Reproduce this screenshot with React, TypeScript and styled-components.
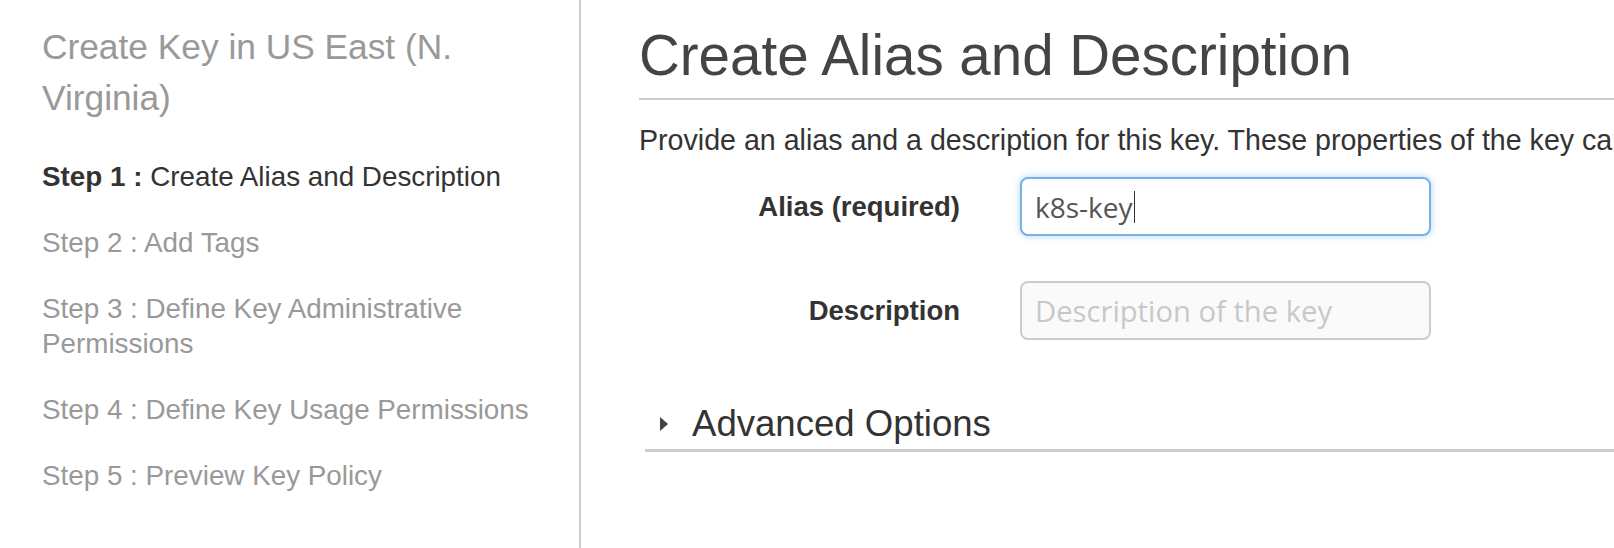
import { FC } from 'react'
import styled, { createGlobalStyle } from 'styled-components'

const GlobalStyle = createGlobalStyle`
    html, body {
        margin: 0;
        padding: 0;
        background: #fff;
    }
    body {
        font-family: 'Liberation Sans', Arial, Helvetica, sans-serif;
        color: #333;
        overflow: hidden;
    }
`

const Page = styled.div`
    display: flex;
    width: 1614px;
    height: 548px;
    overflow: hidden;
`

const Sidebar = styled.aside`
    flex: 0 0 581px;
    box-sizing: border-box;
    padding: 22px 0 0 42px;
    border-right: 2px solid #cccccc;
`

const SidebarTitle = styled.h2`
    margin: 0 0 36px;
    font-size: 35.3px;
    line-height: 50.5px;
    font-weight: 400;
    color: #999999;
    padding-right: 60px;
`

const StepList = styled.ol`
    list-style: none;
    margin: 0;
    padding: 0 40px 0 0;
    display: flex;
    flex-direction: column;
    gap: 31px;
`

type TStep = {
    active?: boolean
}

const Step = styled.li<TStep>`
    font-size: 27.8px;
    line-height: 35px;
    color: ${({ active }) => (active ? '#333333' : '#999999')};
    b {
        font-weight: 700;
    }
`

const Main = styled.main`
    flex: 1;
    min-width: 0;
    padding: 25px 0 0 58px;
`

const Title = styled.h1`
    margin: 0;
    padding-bottom: 11px;
    font-size: 56.5px;
    line-height: 62px;
    font-weight: 400;
    color: #444444;
    border-bottom: 2px solid #cccccc;
    white-space: nowrap;
`

const Intro = styled.p`
    margin: 20px 0 0;
    font-size: 28.6px;
    line-height: 40px;
    color: #333333;
    white-space: nowrap;
`

const Form = styled.div`
    display: grid;
    grid-template-columns: 321px 411px;
    column-gap: 60px;
    row-gap: 45px;
    align-items: center;
    margin-top: 17px;
`

const Label = styled.label`
    text-align: right;
    font-size: 27.5px;
    font-weight: 700;
    color: #333333;
`

type TField = {
    focused?: boolean
}

const Field = styled.div<TField>`
    box-sizing: border-box;
    height: 59px;
    display: flex;
    align-items: center;
    padding: 0 13px;
    border-radius: 8px;
    border: 2px solid ${({ focused }) => (focused ? '#79b0e8' : '#cccccc')};
    background: ${({ focused }) => (focused ? '#ffffff' : '#fafafa')};
    box-shadow: ${({ focused }) => (focused ? '0 0 7px rgba(102, 175, 233, 0.55)' : 'none')};
    font-family: 'Open Sans', 'DejaVu Sans', sans-serif;
    font-size: 28px;
`

const Value = styled.span`
    color: #555555;
`

const Placeholder = styled.span`
    color: #c8c8c8;
    font-size: 29.2px;
`

const Caret = styled.span`
    display: inline-block;
    width: 1.5px;
    height: 32px;
    margin-left: 1px;
    background: #333333;
`

const Advanced = styled.div`
    display: flex;
    align-items: center;
    gap: 24px;
    margin: 63px 0 0 6px;
    padding: 0 0 4px 15px;
    border-bottom: 3px solid #cccccc;
    font-size: 36.6px;
    line-height: 42px;
    color: #333333;
`

const Arrow = styled.span`
    width: 0;
    height: 0;
    border-top: 7px solid transparent;
    border-bottom: 7px solid transparent;
    border-left: 8px solid #444444;
`

const steps = [
    { n: 1, text: 'Create Alias and Description', active: true },
    { n: 2, text: 'Add Tags' },
    { n: 3, text: 'Define Key Administrative Permissions' },
    { n: 4, text: 'Define Key Usage Permissions' },
    { n: 5, text: 'Preview Key Policy' },
]

const App: FC = () => {
    return (
        <>
            <GlobalStyle />
            <Page>
                <Sidebar>
                    <SidebarTitle>Create Key in US East (N. Virginia)</SidebarTitle>
                    <StepList>
                        {steps.map((s) => (
                            <Step key={s.n} active={s.active}>
                                {s.active ? <b>Step {s.n} :</b> : `Step ${s.n} :`} {s.text}
                            </Step>
                        ))}
                    </StepList>
                </Sidebar>
                <Main>
                    <Title>Create Alias and Description</Title>
                    <Intro>
                        Provide an alias and a description for this key. These properties of the key can be
                        changed later.
                    </Intro>
                    <Form>
                        <Label>Alias (required)</Label>
                        <Field focused>
                            <Value>k8s-key</Value>
                            <Caret />
                        </Field>
                        <Label>Description</Label>
                        <Field>
                            <Placeholder>Description of the key</Placeholder>
                        </Field>
                    </Form>
                    <Advanced>
                        <Arrow />
                        Advanced Options
                    </Advanced>
                </Main>
            </Page>
        </>
    )
}

export default App
